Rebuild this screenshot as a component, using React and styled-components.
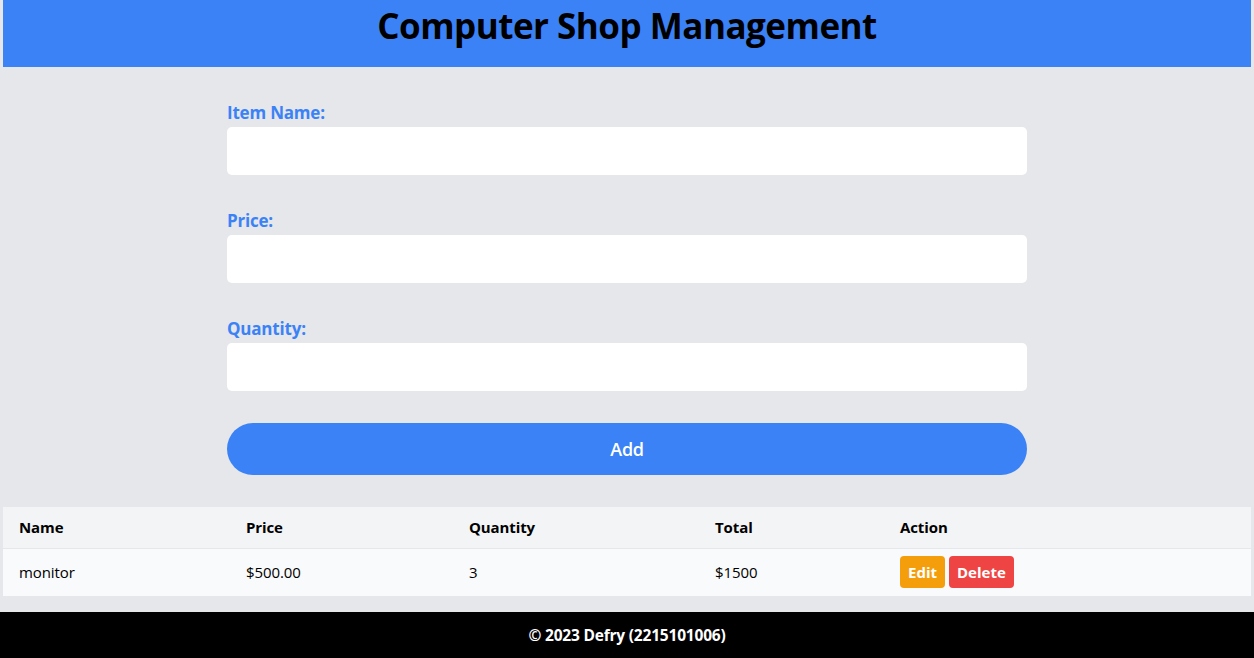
import React from "react";
import styled, { createGlobalStyle } from "styled-components";

const Global = createGlobalStyle`
  html, body { margin: 0; padding: 0; }
  body {
    background: #e5e7eb;
    font-family: "Open Sans", "Noto Sans", "Liberation Sans", sans-serif;
    color: #000;
  }
  * { box-sizing: border-box; }
`;

const Page = styled.div`
  min-height: 658px;
  display: flex;
  flex-direction: column;
`;

const Main = styled.div`
  flex: 1;
  padding: 0 3px;
`;

const Header = styled.header`
  background: #3b82f6;
  height: 67px;
  display: flex;
  justify-content: center;
  padding-top: 3px;
`;

const Title = styled.h1`
  margin: 0;
  font-size: 35px;
  font-weight: 700;
  letter-spacing: -0.5px;
  line-height: 46px;
`;

const Form = styled.form`
  width: 800px;
  margin: 0 auto;
  padding-top: 32px;
  display: flex;
  flex-direction: column;
`;

const Field = styled.div`
  display: flex;
  flex-direction: column;
  margin-bottom: 32px;
`;

const Label = styled.label`
  color: #3b82f6;
  font-weight: 700;
  font-size: 17px;
  line-height: 22px;
  letter-spacing: -0.2px;
  height: 28px;
  padding-top: 3px;
`;

const Input = styled.input`
  height: 48px;
  border: none;
  border-radius: 5px;
  background: #fff;
  padding: 0 12px;
  font: inherit;
  outline: none;
`;

const AddButton = styled.button`
  height: 52px;
  border: none;
  border-radius: 26px;
  background: #3b82f6;
  color: #fff;
  font: inherit;
  font-size: 18px;
  font-weight: 600;
  letter-spacing: -0.3px;
  cursor: pointer;
`;

const Table = styled.table`
  width: 100%;
  margin-top: 32px;
  border-collapse: collapse;
  table-layout: fixed;
  font-size: 15px;
  letter-spacing: -0.1px;
`;

const Th = styled.th`
  text-align: left;
  font-weight: 700;
  padding: 0 16px;
  height: 41px;
  background: #f3f4f6;
  border-bottom: 1px solid #e5e7eb;
`;

const Td = styled.td`
  padding: 0 16px;
  height: 48px;
  background: #f9fafb;
`;

const Actions = styled.div`
  display: flex;
  gap: 4px;
`;

const ActionButton = styled.button`
  height: 32px;
  padding: 0 8px;
  border: none;
  border-radius: 4px;
  background: ${(p) => (p.$variant === "edit" ? "#f59e0b" : "#ef4444")};
  color: #fff;
  font: inherit;
  font-weight: 700;
  font-size: 15px;
`;

const Footer = styled.footer`
  background: #000;
  color: #fff;
  height: 46px;
  display: flex;
  align-items: center;
  justify-content: center;
  font-weight: 700;
  font-size: 15.5px;
  letter-spacing: -0.2px;
  margin-top: 16px;
`;

const cols = ["227px", "223px", "246px", "185px", "auto"];

export default function App() {
  const items = [{ name: "monitor", price: 500, qty: 3 }];
  return (
    <Page>
      <Global />
      <Main>
        <Header>
          <Title>Computer Shop Management</Title>
        </Header>
        <Form onSubmit={(e) => e.preventDefault()}>
          <Field>
            <Label>Item Name:</Label>
            <Input type="text" />
          </Field>
          <Field>
            <Label>Price:</Label>
            <Input type="number" />
          </Field>
          <Field>
            <Label>Quantity:</Label>
            <Input type="number" />
          </Field>
          <AddButton type="submit">Add</AddButton>
        </Form>
        <Table>
          <colgroup>
            {cols.map((w, i) => (
              <col key={i} style={{ width: w }} />
            ))}
          </colgroup>
          <thead>
            <tr>
              <Th>Name</Th>
              <Th>Price</Th>
              <Th>Quantity</Th>
              <Th>Total</Th>
              <Th>Action</Th>
            </tr>
          </thead>
          <tbody>
            {items.map((it) => (
              <tr key={it.name}>
                <Td>{it.name}</Td>
                <Td>${it.price.toFixed(2)}</Td>
                <Td>{it.qty}</Td>
                <Td>${it.price * it.qty}</Td>
                <Td>
                  <Actions>
                    <ActionButton $variant="edit">Edit</ActionButton>
                    <ActionButton $variant="delete">Delete</ActionButton>
                  </Actions>
                </Td>
              </tr>
            ))}
          </tbody>
        </Table>
      </Main>
      <Footer>© 2023 Defry (2215101006)</Footer>
    </Page>
  );
}
